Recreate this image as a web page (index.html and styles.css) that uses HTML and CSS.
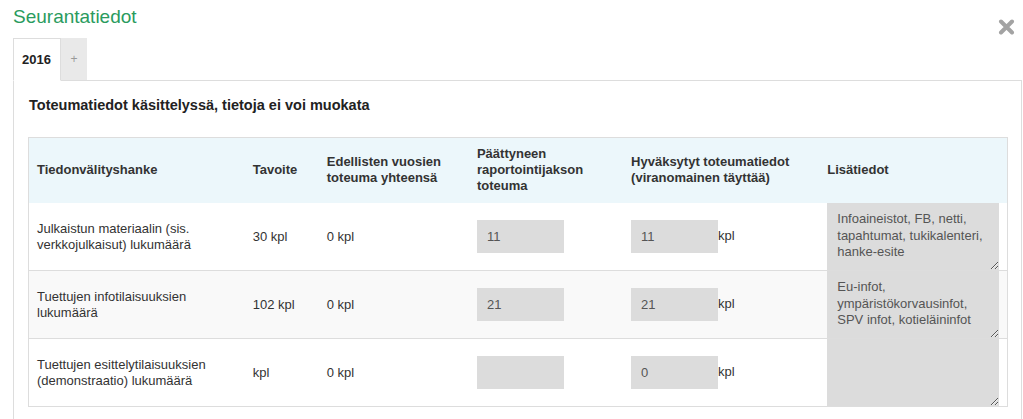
FILE: index.html
```html
<!DOCTYPE html>
<html lang="fi">
<head>
    <meta charset="UTF-8">
    <meta name="viewport" content="width=device-width, initial-scale=1.0">
    <title>Seurantatiedot</title>
    <link rel="stylesheet" href="styles.css">
</head>
<body>
    <div class="modal">
        <div class="modal-header">
            <h1 class="title">Seurantatiedot</h1>
            <button class="close" type="button" aria-label="Sulje">
                <svg width="17" height="16" viewBox="0 0 17 16">
                    <path d="M3 2.5 L14 13.5 M14 2.5 L3 13.5" stroke="#a3a3a3" stroke-width="4" stroke-linecap="round"/>
                </svg>
            </button>
        </div>

        <ul class="tabs">
            <li class="tab active">2016</li>
            <li class="tab add">+</li>
        </ul>

        <div class="tab-panel">
            <h2>Toteumatiedot käsittelyssä, tietoja ei voi muokata</h2>

            <table class="results">
                <colgroup>
                    <col class="c-name">
                    <col class="c-goal">
                    <col class="c-prev">
                    <col class="c-period">
                    <col class="c-approved">
                    <col class="c-info">
                </colgroup>
                <thead>
                    <tr>
                        <th>Tiedonvälityshanke</th>
                        <th>Tavoite</th>
                        <th>Edellisten vuosien toteuma yhteensä</th>
                        <th>Päättyneen raportointijakson toteuma</th>
                        <th>Hyväksytyt toteumatiedot (viranomainen täyttää)</th>
                        <th>Lisätiedot</th>
                    </tr>
                </thead>
                <tbody>
                    <tr>
                        <td>Julkaistun materiaalin (sis. verkkojulkaisut) lukumäärä</td>
                        <td>30 kpl</td>
                        <td>0 kpl</td>
                        <td><input type="text" value="11" readonly></td>
                        <td><input type="text" value="11" readonly>kpl</td>
                        <td class="info"><textarea readonly>Infoaineistot, FB, netti, tapahtumat, tukikalenteri, hanke-esite</textarea></td>
                    </tr>
                    <tr>
                        <td>Tuettujen infotilaisuuksien lukumäärä</td>
                        <td>102 kpl</td>
                        <td>0 kpl</td>
                        <td><input type="text" value="21" readonly></td>
                        <td><input type="text" value="21" readonly>kpl</td>
                        <td class="info"><textarea readonly>Eu-infot, ympäristökorvausinfot, SPV infot, kotieläininfot</textarea></td>
                    </tr>
                    <tr>
                        <td>Tuettujen esittelytilaisuuksien (demonstraatio) lukumäärä</td>
                        <td>kpl</td>
                        <td>0 kpl</td>
                        <td><input type="text" value="" readonly></td>
                        <td><input type="text" value="0" readonly>kpl</td>
                        <td class="info"><textarea readonly></textarea></td>
                    </tr>
                </tbody>
            </table>
        </div>
    </div>
</body>
</html>
```

FILE: styles.css
```css
body {
    font-family: "Liberation Sans", Arial, sans-serif;
    font-size: 13px;
    color: #333;
    background-color: #fff;
    margin: 0;
    padding: 0;
}
.modal {
    padding: 0 1px 0 13px;
}
.modal-header {
    display: flex;
    justify-content: space-between;
    align-items: flex-start;
    height: 38px;
}
.title {
    margin: 0;
    padding-top: 6px;
    font-size: 19px;
    line-height: 22px;
    font-weight: normal;
    color: #2a9b5e;
}
.close {
    margin: 19px 7px 0 0;
    padding: 0;
    border: none;
    background: none;
    line-height: 0;
    cursor: pointer;
}
.tabs {
    display: flex;
    list-style: none;
    margin: 0;
    padding: 0;
    border-bottom: 1px solid #ddd;
}
.tab {
    height: 42px;
    line-height: 42px;
    box-sizing: border-box;
    font-size: 13px;
}
.tab.active {
    width: 48px;
    height: 43px;
    margin-bottom: -1px;
    padding-left: 8px;
    border: 1px solid #ddd;
    border-bottom-color: transparent;
    background-color: #fff;
    font-weight: bold;
    color: #222;
}
.tab.add {
    width: 26px;
    margin-top: 0;
    text-align: center;
    background-color: #e9e9e9;
    color: #999;
    font-size: 12px;
}
.tab-panel {
    border: 1px solid #ddd;
    border-top: none;
    padding: 14px 13px 14px 14px;
}
.tab-panel h2 {
    margin: 0 0 22px 1px;
    font-size: 14.5px;
    line-height: 20px;
    color: #222;
}
.results {
    width: 980px;
    border-collapse: collapse;
    border: 1px solid #ddd;
    table-layout: fixed;
}
.c-name { width: 216px; }
.c-goal { width: 74px; }
.c-prev { width: 150px; }
.c-period { width: 154px; }
.c-approved { width: 196px; }
.c-info { width: 188px; }
.results th {
    background-color: #ecf7fb;
    text-align: left;
    font-size: 13px;
    line-height: 16px;
    padding: 8px 8px 9px 8px;
    vertical-align: middle;
    color: #333;
}
.results td {
    padding: 0 8px;
    line-height: 16px;
    vertical-align: middle;
    height: 67px;
}
.results tbody tr + tr td {
    border-top: 1px solid #ddd;
}
.results tbody tr:nth-child(2) {
    background-color: #f9f9f9;
}
.results input {
    width: 87px;
    height: 33px;
    box-sizing: border-box;
    padding: 0 10px;
    border: none;
    background-color: #dcdcdc;
    font-family: inherit;
    font-size: 13px;
    color: #555;
    vertical-align: middle;
    outline: none;
}
.results td.info {
    padding: 0 8px;
}
.results textarea {
    display: block;
    width: 172px;
    height: 67px;
    box-sizing: border-box;
    padding: 8px 4px 6px 10px;
    border: none;
    background-color: #dcdcdc;
    font-family: inherit;
    font-size: 13px;
    line-height: 16.5px;
    color: #555;
    outline: none;
    overflow: hidden;
}
```
